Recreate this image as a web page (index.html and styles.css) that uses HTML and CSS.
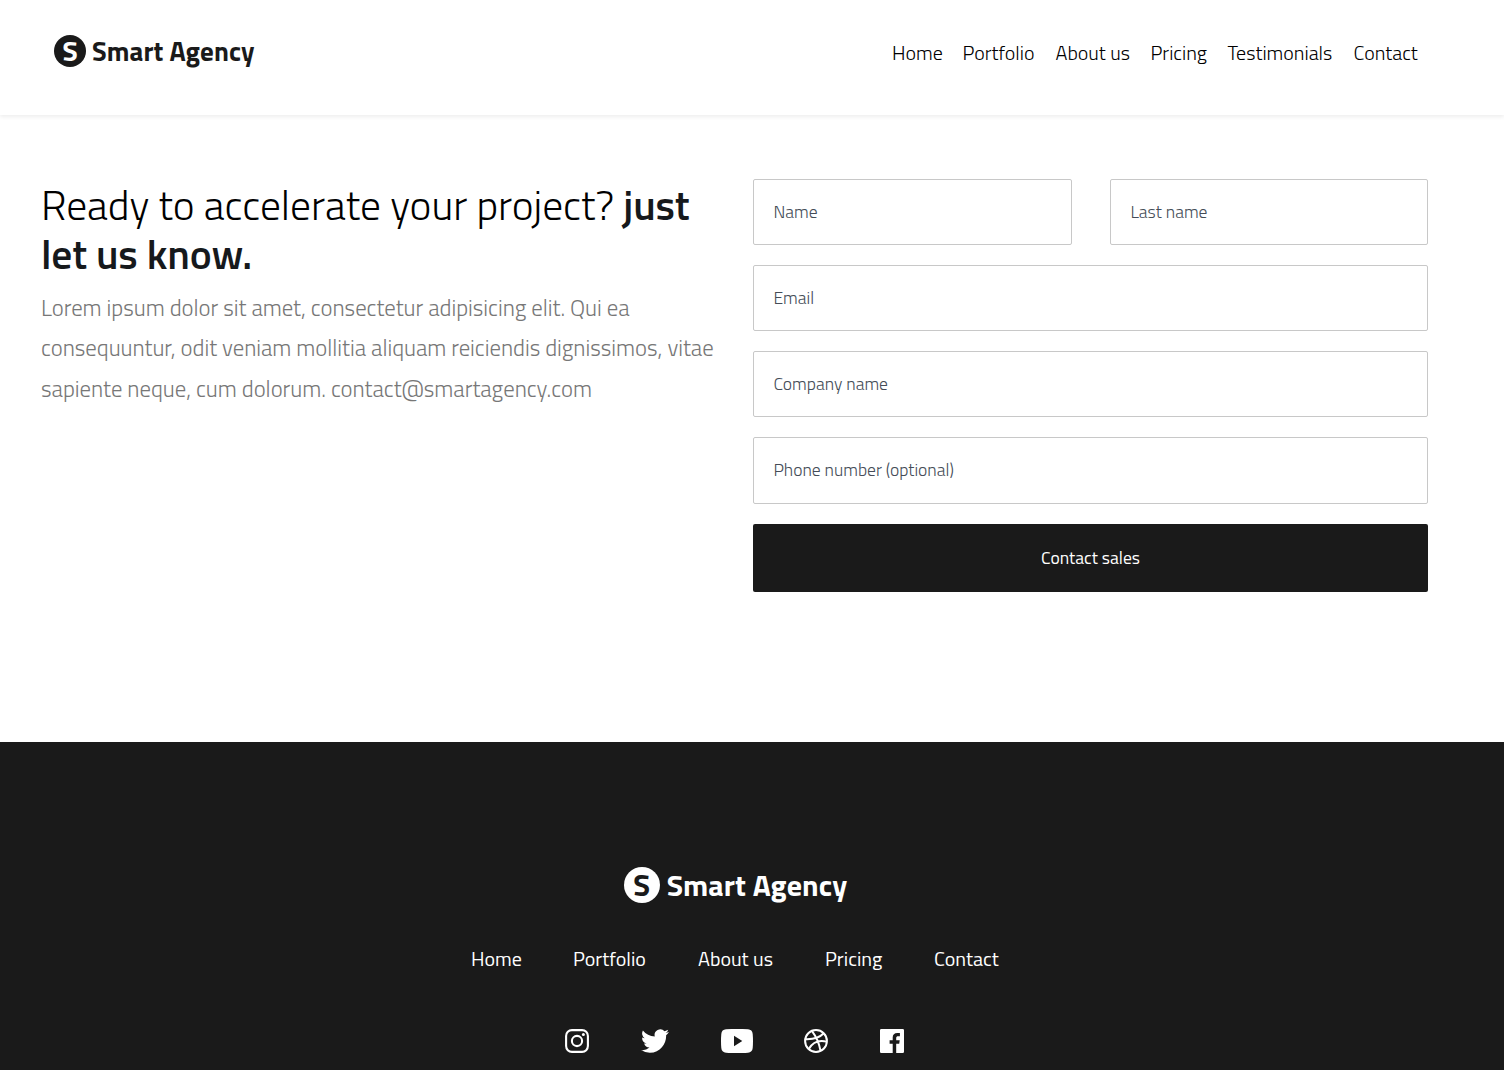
FILE: index.html
```html
<!DOCTYPE html>
<html lang="en">
<head>
<meta charset="utf-8">
<title>Smart Agency</title>
<link rel="stylesheet" href="styles.css">
</head>
<body>
<header class="header">
  <a class="logo"><span class="logo-mark">S</span><span class="logo-name">Smart Agency</span></a>
  <nav class="nav">
    <a>Home</a><a>Portfolio</a><a>About us</a><a>Pricing</a><a>Testimonials</a><a>Contact</a>
  </nav>
</header>
<main class="main">
  <section class="intro">
    <h1>Ready to accelerate your project? <strong>just<br>let us know.</strong></h1>
    <p>Lorem ipsum dolor sit amet, consectetur adipisicing elit. Qui ea<br>consequuntur, odit veniam mollitia aliquam reiciendis dignissimos, vitae<br>sapiente neque, cum dolorum. contact@smartagency.com</p>
  </section>
  <form class="form">
    <div class="row"><input class="field" type="text" placeholder="Name"><input class="field" type="text" placeholder="Last name"></div>
    <input class="field" type="text" placeholder="Email">
    <input class="field" type="text" placeholder="Company name">
    <input class="field tall" type="text" placeholder="Phone number (optional)">
    <button class="submit" type="button">Contact sales</button>
  </form>
</main>
<footer class="footer">
  <a class="logo logo-light"><span class="logo-mark">S</span><span class="logo-name">Smart Agency</span></a>
  <nav class="footer-nav">
    <a>Home</a><a>Portfolio</a><a>About us</a><a>Pricing</a><a>Contact</a>
  </nav>
  <div class="social">
    <svg class="instagram" viewBox="0 0 24 24"><rect x="1.1" y="1.1" width="21.8" height="21.8" rx="5.8" fill="none" stroke="currentColor" stroke-width="2.1"/><circle cx="12" cy="12" r="5.1" fill="none" stroke="currentColor" stroke-width="2.1"/><circle cx="18.4" cy="5.6" r="1.5" fill="currentColor"/></svg>
    <svg class="twitter" viewBox="0 2 24 20" preserveAspectRatio="none"><path fill="currentColor" d="M23.95 4.57a10 10 0 0 1-2.82.77 4.96 4.96 0 0 0 2.16-2.72c-.95.55-2 .96-3.12 1.18a4.92 4.92 0 0 0-8.38 4.48C7.69 8.1 4.07 6.13 1.64 3.16a4.92 4.92 0 0 0 1.52 6.57 4.9 4.9 0 0 1-2.23-.61v.06a4.92 4.92 0 0 0 3.95 4.83 5 5 0 0 1-2.21.08 4.94 4.94 0 0 0 4.6 3.42A9.87 9.87 0 0 1 0 19.54a13.99 13.99 0 0 0 7.55 2.21c9.05 0 14-7.5 14-13.98 0-.21 0-.42-.02-.63a9.94 9.94 0 0 0 2.42-2.57z"/></svg>
    <svg class="youtube" viewBox="0 0 32 24"><path fill="currentColor" fill-rule="evenodd" d="M5 .3Q16-.5 27 .3Q31.3.6 31.7 5Q32.3 12 31.7 19Q31.3 23.4 27 23.7Q16 24.5 5 23.7Q.7 23.4.3 19Q-.3 12 .3 5Q.7.6 5 .3ZM13 6.8V17.2L21.3 12Z"/></svg>
    <svg class="dribbble" viewBox="0 0 24 24" fill="none" stroke="currentColor" stroke-width="2"><circle cx="12" cy="12" r="10.9"/><path d="M8 2.1C12 7.3 15 13.5 16.5 21.8M1.4 10.2C8.5 10.5 15.5 8.7 19.8 4.3M4.8 20C8.4 13.5 14.5 10.7 22.7 12.6"/></svg>
    <svg class="facebook" viewBox="0 0 24 24"><path fill="currentColor" d="M1.3 0H22.7Q24 0 24 1.3V22.7Q24 24 22.7 24H16.2V14.7H19.2L19.7 11.3H16.2V8.9C16.2 7.7 16.8 7.2 18.2 7.2H19.9V4.1C19.3 4 18.4 3.9 17.3 3.9C14.4 3.9 12.7 5.5 12.7 8.4V11.3H9.6V14.7H12.7V24H1.3Q0 24 0 22.7V1.3Q0 0 1.3 0Z"/></svg>
  </div>
</footer>
</body>
</html>
```
FILE: styles.css
```css
* { box-sizing: border-box; }
body {
  margin: 0;
  height: 1070px;
  overflow: hidden;
  display: flex;
  flex-direction: column;
  background: #fff;
  color: #000;
  font-family: "Titillium Web", Roboto, "Liberation Sans", sans-serif;
}
.header {
  flex: none;
  height: 115px;
  padding: 34px 85px 0 54px;
  display: flex;
  justify-content: space-between;
  align-items: flex-start;
  box-shadow: 0 2px 4px rgba(0, 0, 0, .07);
}
.logo {
  display: flex;
  align-items: center;
  color: #1a1a1a;
  font-weight: 700;
  white-space: nowrap;
}
.logo-mark {
  width: 32px;
  height: 32px;
  border-radius: 50%;
  background: #1a1a1a;
  color: #fff;
  display: grid;
  place-items: center;
  font-size: 28px;
  font-weight: 700;
  line-height: 32px;
}
.logo-name { margin-left: 6px; font-size: 27px; line-height: 34px; letter-spacing: .08px; }
.nav {
  display: grid;
  grid-template-columns: 70.5px 93px 95px 77px 126px 65.5px;
  margin-top: 4px;
  font-size: 20px;
  font-weight: 300;
  line-height: 30px;
  white-space: nowrap;
}
.main {
  flex: none;
  height: 627px;
  padding: 64px 76px 0 41px;
  display: flex;
  justify-content: space-between;
}
.intro { width: 700px; white-space: nowrap; }
h1 { margin: 1px 0 0; font-size: 41.5px; font-weight: 300; line-height: 49px; }
h1 strong { font-weight: 600; letter-spacing: -.15px; color: #16191c; }
.intro p { margin: 10px 0 0; font-size: 22.8px; font-weight: 300; line-height: 40.4px; letter-spacing: -.03px; color: #777; }
.form { width: 675px; flex: none; display: flex; flex-direction: column; gap: 20px; margin-left: -40px; }
.row { display: grid; grid-template-columns: 319px 318px; gap: 38px; }
.field {
  width: 100%;
  height: 66px;
  border: 1px solid #c8c8c8;
  border-radius: 2px;
  padding: 0 19.4px 2px;
  font: 300 17.6px/24px "Titillium Web", Roboto, "Liberation Sans", sans-serif;
  background: #fff;
}
.tall { height: 67px; padding-bottom: 3px; }
.field::placeholder { color: #444c57; opacity: 1; }
.submit {
  height: 68px;
  border: 0;
  border-radius: 2px;
  background: #1a1a1a;
  color: #fff;
  font: 400 17.6px/24px "Titillium Web", Roboto, "Liberation Sans", sans-serif;
}
.footer {
  flex: 1;
  padding: 125px 34px 0 0;
  background: #1a1a1a;
  color: #fff;
  display: flex;
  flex-direction: column;
  align-items: center;
}
.logo-light { color: #fff; margin-left: 1px; }
.logo-light .logo-mark { width: 36px; height: 36px; background: #fff; color: #1a1a1a; font-size: 31px; line-height: 36px; }
.logo-light .logo-name { margin-left: 7px; font-size: 30px; line-height: 36px; }
.footer-nav {
  display: grid;
  grid-template-columns: 102px 125px 127px 109px 65px;
  margin-top: 41px;
  font-size: 20px;
  line-height: 30px;
  white-space: nowrap;
}
.social { display: flex; align-items: center; gap: 51.75px; margin: 55px 1px 0 0; height: 24px; }
.social svg { height: 24px; width: 24px; }
.social .twitter { width: 28px; }
.social .youtube { width: 32px; }
```
